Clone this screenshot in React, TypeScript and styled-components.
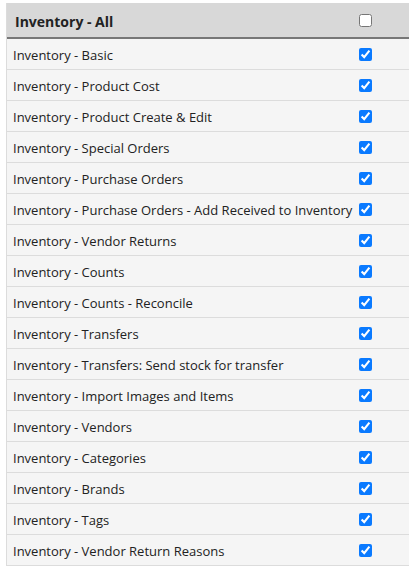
import React from "react";
import styled, { createGlobalStyle } from "styled-components";

const Global = createGlobalStyle`
  html, body { margin: 0; padding: 0; background: #fff; overflow: hidden; }
  body { font-family: "Open Sans", "Liberation Sans", sans-serif; color: #222; }
`;

const Table = styled.div`
  margin: 3px 0 0 6px;
  width: 420px;
  display: grid;
  grid-template-columns: 346px 1fr;
  border-left: 1px solid #dcdcdc;
`;

const HeadCell = styled.div<{ $check?: boolean }>`
  background: #d8d8d8;
  height: 36px;
  box-sizing: border-box;
  border-bottom: 2px solid #777;
  display: flex;
  align-items: center;
  padding-left: ${(p) => (p.$check ? "6px" : "8px")};
  padding-top: ${(p) => (p.$check ? "0" : "2px")};
  font-weight: 700;
  font-size: 14px;
`;

const Cell = styled.div<{ $check?: boolean }>`
  background: #f5f5f5;
  height: 31px;
  box-sizing: border-box;
  border-bottom: 1px solid #dcdcdc;
  display: flex;
  align-items: center;
  padding-left: 6px;
  padding-top: ${(p) => (p.$check ? "0" : "2px")};
  font-size: 13px;
  white-space: nowrap;
`;

const Box = styled.input`
  width: 13px;
  height: 13px;
  margin: 0;
  accent-color: #0a7aff;
`;

const items = [
  "Inventory - Basic",
  "Inventory - Product Cost",
  "Inventory - Product Create & Edit",
  "Inventory - Special Orders",
  "Inventory - Purchase Orders",
  "Inventory - Purchase Orders - Add Received to Inventory",
  "Inventory - Vendor Returns",
  "Inventory - Counts",
  "Inventory - Counts - Reconcile",
  "Inventory - Transfers",
  "Inventory - Transfers: Send stock for transfer",
  "Inventory - Import Images and Items",
  "Inventory - Vendors",
  "Inventory - Categories",
  "Inventory - Brands",
  "Inventory - Tags",
  "Inventory - Vendor Return Reasons",
];

export default function App() {
  return (
    <>
      <Global />
      <Table>
        <HeadCell>Inventory - All</HeadCell>
        <HeadCell $check>
          <Box type="checkbox" readOnly />
        </HeadCell>
        {items.map((t) => (
          <React.Fragment key={t}>
            <Cell>{t}</Cell>
            <Cell $check>
              <Box type="checkbox" defaultChecked />
            </Cell>
          </React.Fragment>
        ))}
      </Table>
    </>
  );
}
